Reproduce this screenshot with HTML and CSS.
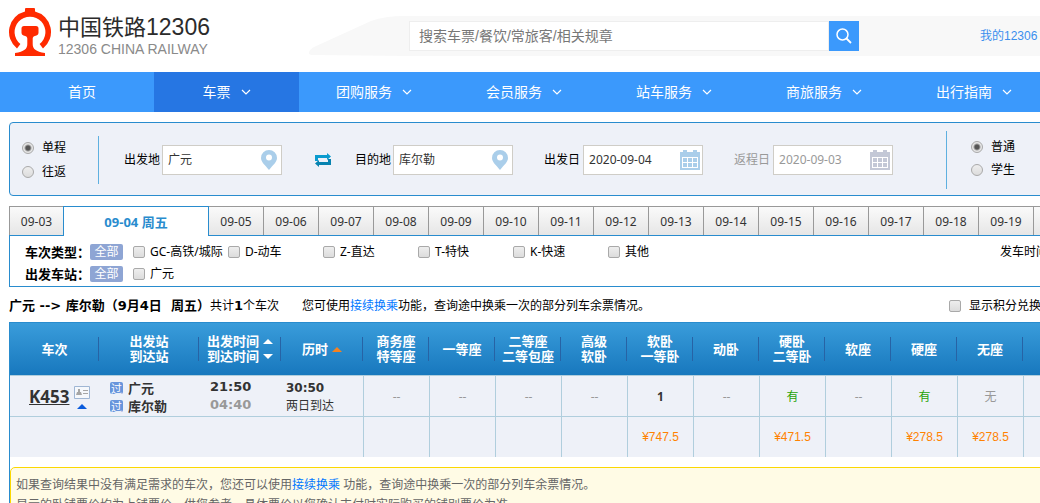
FILE: index.html
```html
<!DOCTYPE html>
<html lang="zh-CN">
<head>
<meta charset="utf-8">
<title>中国铁路12306</title>
<link rel="stylesheet" href="styles.css">
</head>
<body>
<svg class="defs" width="0" height="0" aria-hidden="true">
  <symbol id="chevron" viewBox="0 0 10 6"><path d="M1 1l4 4 4-4" fill="none" stroke="#fff" stroke-width="1.2"/></symbol>
  <symbol id="pin" viewBox="0 0 16 20"><path fill-rule="evenodd" d="M8 0a8 8 0 0 1 8 8c0 4-4 7-8 12C4 15 0 12 0 8a8 8 0 0 1 8-8zm0 4.500a3 3 0 1 0 0 6 3 3 0 0 0 0-6z" fill="#aaceea"/></symbol>
  <symbol id="calendar" viewBox="0 0 20 20"><path fill="currentColor" d="M0 2h3V0h4v2h6V0h4v2h3v18H0z"/><path fill="#fff" d="M2 7h16v11H2z"/><path fill="currentColor" d="M3 8h4v4H3zM8 8h4v4H8zM13 8h4v4h-4zM3 13h4v4H3zM8 13h4v4H8zM13 13h4v4h-4z"/></symbol>
</svg>
<div class="page">
  <header class="header">
    <a class="logo" href="#">
      <svg width="44" height="49" viewBox="0 0 44 49" aria-hidden="true">
        <path d="M17 1q0-1 1-1h8q1 0 1 1v2.600A21 21 0 0 1 35 40.500l-3.400-4.400A15.400 15.400 0 1 0 12.400 36.100L9 40.500A21 21 0 0 1 17 3.600z" fill="#ff2a00"/>
        <path d="M16 18h12q2.500 0 2.500 2.500V25q0 2-2 2.400-3.800.6-3.800 3V36c0 5 3 7.500 12.300 9v3H7v-3c9.300-1.500 12.300-4 12.300-9v-5.600q0-2.400-3.800-3-2-.4-2-2.400v-4.500Q13.500 18 16 18z" fill="#ff2a00"/>
      </svg>
      <span class="logo-text">
        <span class="logo-name">中国铁路<span class="logo-num">12306</span></span>
        <span class="logo-sub">12306 CHINA RAILWAY</span>
      </span>
    </a>
    <div class="topbar">
      <svg class="train-nose" width="100" height="40" viewBox="0 0 100 40" aria-hidden="true"><path d="M100 0H95Q76 0 62 5L5 31q-5 3-5 6 0 2 4 2l96 1z" fill="#f8f8f8"/></svg>
      <div class="topbar-body">
        <form class="site-search">
          <input type="text" aria-label="搜索" placeholder="搜索车票/餐饮/常旅客/相关规章">
          <button type="button" aria-label="搜索"><svg width="16" height="16" viewBox="0 0 16 16"><circle cx="6.500" cy="6.500" r="5.500" fill="none" stroke="#fff" stroke-width="1.500"/><path d="M10.500 10.500L15 15" stroke="#fff" stroke-width="1.800"/></svg></button>
        </form>
        <a class="my-link" href="#">我的12306</a>
      </div>
    </div>
  </header>

  <nav class="nav">
    <a class="nav-home" href="#">首页</a>
    <a class="nav-ticket" href="#">车票<svg width="10" height="6"><use href="#chevron"/></svg></a>
    <a href="#">团购服务<svg width="10" height="6"><use href="#chevron"/></svg></a>
    <a href="#">会员服务<svg width="10" height="6"><use href="#chevron"/></svg></a>
    <a href="#">站车服务<svg width="10" height="6"><use href="#chevron"/></svg></a>
    <a href="#">商旅服务<svg width="10" height="6"><use href="#chevron"/></svg></a>
    <a href="#">出行指南<svg width="10" height="6"><use href="#chevron"/></svg></a>
  </nav>

  <main class="content">
    <form class="query">
      <div class="radios trip">
        <label><input type="radio" name="trip" checked>单程</label>
        <label><input type="radio" name="trip">往返</label>
      </div>
      <div class="fields">
        <div class="field"><label for="from">出发地</label><span class="box"><input id="from" type="text" value="广元"><svg width="16" height="20"><use href="#pin"/></svg></span></div>
        <button class="swap" type="button" aria-label="交换"><svg width="16" height="14" viewBox="0 0 16 14"><path d="M0 8V2h12V0l4 3.500L12 7V5H3v3z" fill="#0a9bcf"/><path d="M16 6v6H4v2l-4-3.500L4 7v2h9V6z" fill="#0783b0"/></svg></button>
        <div class="field"><label for="to">目的地</label><span class="box"><input id="to" type="text" value="库尔勒"><svg width="16" height="20"><use href="#pin"/></svg></span></div>
        <div class="field date"><label for="go">出发日</label><span class="box"><input id="go" type="text" value="2020-09-04"><svg class="cal" width="20" height="20"><use href="#calendar"/></svg></span></div>
        <div class="field date disabled"><label for="back">返程日</label><span class="box"><input id="back" type="text" value="2020-09-03" disabled><svg class="cal" width="20" height="20"><use href="#calendar"/></svg></span></div>
      </div>
      <div class="radios kind">
        <label><input type="radio" name="kind" checked>普通</label>
        <label><input type="radio" name="kind">学生</label>
      </div>
    </form>

    <div class="days">
      <button type="button">09-03</button><button type="button" class="active">09-04 周五</button><button type="button">09-05</button><button type="button">09-06</button><button type="button">09-07</button><button type="button">09-08</button><button type="button">09-09</button><button type="button">09-10</button><button type="button">09-11</button><button type="button">09-12</button><button type="button">09-13</button><button type="button">09-14</button><button type="button">09-15</button><button type="button">09-16</button><button type="button">09-17</button><button type="button">09-18</button><button type="button">09-19</button><button type="button" class="rest" aria-label="更多日期"></button>
    </div>

    <section class="filters">
      <div class="filter-row">
        <b>车次类型：</b><button type="button">全部</button>
        <div class="options">
          <label><input type="checkbox">GC-高铁/城际</label>
          <label><input type="checkbox">D-动车</label>
          <label><input type="checkbox">Z-直达</label>
          <label><input type="checkbox">T-特快</label>
          <label><input type="checkbox">K-快速</label>
          <label><input type="checkbox">其他</label>
        </div>
        <span class="depart">发车时间：</span>
      </div>
      <div class="filter-row">
        <b>出发车站：</b><button type="button">全部</button>
        <div class="options"><label><input type="checkbox">广元</label></div>
      </div>
    </section>

    <div class="summary">
      <p class="route"><b>广元 --&gt; 库尔勒（9月4日&nbsp; 周五）</b>共计<b>1</b>个车次</p>
      <p class="hint">您可使用<a href="#">接续换乘</a>功能，查询途中换乘一次的部分列车余票情况。</p>
      <label><input type="checkbox">显示积分兑换车次</label>
    </div>

    <div class="results">
      <table>
        <colgroup><col class="c-train"><col class="c-station"><col class="c-time"><col class="c-time"><col class="c-seat" span="10"><col></colgroup>
        <thead>
          <tr>
            <th>车次</th>
            <th>出发站<br>到达站</th>
            <th><span class="sort">出发时间<svg width="10" height="5"><path d="M0 5l5-5 5 5z" fill="#fff"/></svg></span><span class="sort">到达时间<svg width="10" height="5"><path d="M0 0h10L5 5z" fill="#fff"/></svg></span></th>
            <th><span class="sort">历时<svg width="10" height="5"><path d="M0 5l5-5 5 5z" fill="#f58220"/></svg></span></th>
            <th>商务座<br>特等座</th>
            <th>一等座</th>
            <th>二等座<br>二等包座</th>
            <th>高级<br>软卧</th>
            <th>软卧<br>一等卧</th>
            <th>动卧</th>
            <th>硬卧<br>二等卧</th>
            <th>软座</th>
            <th>硬座</th>
            <th>无座</th>
            <th></th>
          </tr>
        </thead>
        <tbody>
          <tr>
            <td><div class="train"><a href="#">K453</a><span class="train-icons"><svg width="16" height="13" viewBox="0 0 16 13"><path d="M.5.5h15v12H.5z" fill="#f5f8fc" stroke="#9fb6d4"/><path d="M4 3h2v3h1l1 3H2l1-3h1zM9 4h5v1H9zM9 7h5v1H9z" fill="#a6a6a6"/></svg><svg width="10" height="5"><path d="M0 5l5-5 5 5z" fill="#0a5bdc"/></svg></span></div></td>
            <td><div class="stations"><span><i>过</i>广元</span><span><i>过</i>库尔勒</span></div></td>
            <td><div class="times"><b>21:50</b><b class="arrive">04:40</b></div></td>
            <td><div class="duration"><b>30:50</b><span>两日到达</span></div></td>
            <td class="seat none">--</td>
            <td class="seat none">--</td>
            <td class="seat none">--</td>
            <td class="seat none">--</td>
            <td class="seat"><b>1</b></td>
            <td class="seat none">--</td>
            <td class="seat yes">有</td>
            <td class="seat none">--</td>
            <td class="seat yes">有</td>
            <td class="seat none">无</td>
            <td class="seat"></td>
          </tr>
          <tr class="prices">
            <td colspan="4"></td>
            <td class="seat"></td>
            <td class="seat"></td>
            <td class="seat"></td>
            <td class="seat"></td>
            <td class="seat">¥747.5</td>
            <td class="seat"></td>
            <td class="seat">¥471.5</td>
            <td class="seat"></td>
            <td class="seat">¥278.5</td>
            <td class="seat">¥278.5</td>
            <td class="seat"></td>
          </tr>
        </tbody>
      </table>
      <div class="tips">
        <p>如果查询结果中没有满足需求的车次，您还可以使用<a href="#">接续换乘</a> 功能，查询途中换乘一次的部分列车余票情况。</p>
        <p>显示的卧铺票价均为上铺票价，供您参考。具体票价以您确认支付时实际购买的铺别票价为准。</p>
      </div>
    </div>
  </main>
</div>
</body>
</html>
```
FILE: styles.css
```css
* { box-sizing: border-box; }
body {
  margin: 0;
  overflow: hidden;
  background: #fff;
  color: #000;
  font: 12px/18px "Noto Sans", "Noto Sans CJK SC", sans-serif;
}
a { text-decoration: none; color: #0077ff; }
p { margin: 0; }
button, input { font: inherit; color: inherit; margin: 0; padding: 0; border: 0; border-radius: 0; }
button { cursor: pointer; }
svg { display: block; flex: none; }
.defs { position: absolute; }
.page { min-width: 1210px; }

/* header */
.header { display: flex; height: 72px; }
.logo { display: flex; gap: 6px; width: 309px; padding: 8px 0 0 8px; }
.logo-text {
  display: flex;
  flex-direction: column;
  padding-top: 6px;
  font-family: "Liberation Sans", "Noto Sans CJK SC", sans-serif;
}
.logo-name { font-size: 22px; line-height: 26px; color: #2b2b2b; }
.logo-num { font-size: 23px; }
.logo-sub { font-size: 14px; line-height: 16px; color: #8a8a8a; }
.topbar { display: flex; flex: 1; height: 40px; margin-top: 16px; }
.topbar-body { display: flex; align-items: center; flex: 1; background: #f8f8f8; }
.site-search { display: flex; }
.site-search input {
  width: 420px;
  height: 30px;
  padding: 0 9px;
  border: 1px solid #eee;
  background: #fff;
  font: 14px "Liberation Sans", "Noto Sans CJK SC", sans-serif;
}
.site-search input::placeholder { color: #777; }
.site-search button { display: grid; place-items: center; width: 30px; height: 30px; background: #3b99fc; }
.my-link { margin-left: 121px; color: #3b8fee; font-family: "Liberation Sans", "Noto Sans CJK SC", sans-serif; }

/* navigation */
.nav { display: flex; height: 40px; background: #3b99fc; font-size: 14px; }
.nav a { display: flex; align-items: center; justify-content: center; gap: 10px; width: 150px; color: #fff; }
.nav .nav-home { width: 154px; padding-left: 10px; }
.nav .nav-ticket { width: 145px; background: #2676e3; }

.content { padding: 10px 9px 0; }

/* query form */
.query {
  display: flex;
  align-items: center;
  height: 74px;
  padding-top: 2px;
  border: 1px solid #298cce;
  border-radius: 4px;
  background: #eef1f8;
}
.radios { display: flex; flex-direction: column; }
.radios label { display: flex; align-items: center; gap: 8px; }
.trip { gap: 6px; padding: 3px 0; width: 89px; padding-left: 12px; border-right: 1px solid #5eb0e0; }
.kind { gap: 5px; margin-left: 53px; padding: 7px 0 10px 24px; border-left: 1px solid #5eb0e0; }
input[type="radio"], input[type="checkbox"] {
  appearance: none;
  flex: none;
  width: 12px;
  height: 12px;
  border: 1px solid #a9a9a9;
  background: linear-gradient(#eee, #dcdcdc);
}
input[type="radio"] { border-radius: 50%; }
input[type="checkbox"] { border-radius: 2px; }
input[type="radio"]:checked { background: radial-gradient(circle, #555 2px, #e6e6e6 4px); }
.fields { display: flex; align-items: center; padding-left: 25px; }
.field { display: flex; align-items: center; gap: 2px; }
.field.date { margin-left: 31px; gap: 3px; }
.box { display: flex; align-items: center; width: 120px; height: 30px; padding: 0 4px 0 5px; border: 1px solid #cfcdc7; background: #fff; }
.box input { flex: 1; min-width: 0; background: none; color: #333; }
.field.disabled, .disabled .box input { color: #999; }
.cal { color: #aaceea; margin-left: 3px; }
.date .box { padding-right: 2px; }
.disabled .cal { color: #c3c8d6; }
.swap { margin: 0 24px 0 33px; background: none; }

/* day tabs */
.days { display: flex; height: 29px; margin-top: 10px; }
.days button {
  width: 55px;
  flex: none;
  padding-top: 2px;
  border: solid #999;
  border-width: 1px 1px 0 0;
  background: linear-gradient(#fafafa, #e6e6e6);
  color: #333;
}
.days button:first-child { width: 54px; border-width: 1px 0 0 1px; }
.days .active {
  width: 146px;
  height: 30px;
  padding-top: 0;
  border: 1px solid #298cce;
  border-bottom: 0;
  background: #fff;
  color: #298cce;
  font-weight: bold;
  font-size: 13px;
  z-index: 1;
}
.days .rest { flex: 1; }

/* filters */
.filters { display: flex; flex-direction: column; gap: 4px; padding: 7px 0 3px 15px; border: 1px solid #298cce; }
.filter-row { display: flex; align-items: center; height: 18px; }
.filter-row b { width: 65px; font-size: 13px; white-space: nowrap; }
.filter-row button { width: 33px; height: 16px; line-height: 16px; border-radius: 2px; background: #8ea5d4; color: #fff; }
.options { display: flex; padding-left: 10px; }
.options label { display: flex; align-items: center; gap: 5px; width: 95px; white-space: nowrap; }
.depart { margin-left: 297px; }

/* summary */
.summary { display: flex; align-items: center; height: 35px; padding-top: 2px; }
.route { width: 293px; white-space: nowrap; }
.route b { font-family: "DejaVu Sans", "Noto Sans CJK SC", sans-serif; font-size: 13px; }
.hint { width: 647px; }
.summary label { display: flex; align-items: center; gap: 8px; white-space: nowrap; }

/* results */
.results { border-left: 1px solid #298cce; }
table { width: 100%; table-layout: fixed; border-collapse: separate; border-spacing: 0; }
.c-train { width: 89px; }
.c-station { width: 100px; }
.c-time { width: 82px; }
.c-seat { width: 66px; }
thead tr { background: linear-gradient(#3a9ddb, #1777bd); }
th {
  height: 54px;
  padding: 0;
  border-top: 1px solid #298cce;
  border-bottom: 1px solid #b0cedd;
  background: linear-gradient(#2763a5, #2763a5) right center / 1px 24px no-repeat;
  color: #fff;
  font-size: 13px;
  line-height: 15px;
}
.sort { display: flex; align-items: center; justify-content: center; gap: 4px; }
td { height: 41px; padding: 0; border-bottom: 1px solid #b0cedd; background: #eef1f8; color: #333; }
.prices td { height: 40px; border-bottom: 0; }
.seat { padding-top: 2px; border-left: 1px solid #b0cedd; text-align: center; }
.none { color: #999; }
.yes { color: #26a306; }
.prices .seat { padding-top: 0; color: #ff8201; font-family: "Liberation Sans", sans-serif; }
.train { display: flex; align-items: center; gap: 5px; padding: 2px 0 0 19px; }
.train a { color: #333; font-size: 17px; line-height: 22px; font-weight: bold; text-decoration: underline; }
.train-icons { display: flex; flex-direction: column; align-items: center; gap: 5px; }
.stations, .times, .duration { display: flex; flex-direction: column; }
.stations { padding: 1px 0 0 11px; font-size: 13px; font-weight: bold; }
.stations span { display: flex; align-items: center; gap: 5px; }
.stations i { width: 13px; height: 12px; border-radius: 2px; background: #6795dc; color: #fff; font: 11px/12px "Noto Sans CJK SC", sans-serif; text-align: center; }
.times { padding-left: 11px; font-family: "DejaVu Sans", sans-serif; font-size: 13px; }
.arrive { color: #999; }
.duration { padding: 1px 0 0 5px; }
.duration b { font-family: "DejaVu Sans", sans-serif; }

.tips {
  margin-top: 10px;
  padding: 7px 5px;
  border: 1px solid #fbd800;
  border-radius: 5px;
  background: #fffbe5;
  color: #666;
  line-height: 20px;
}
```
